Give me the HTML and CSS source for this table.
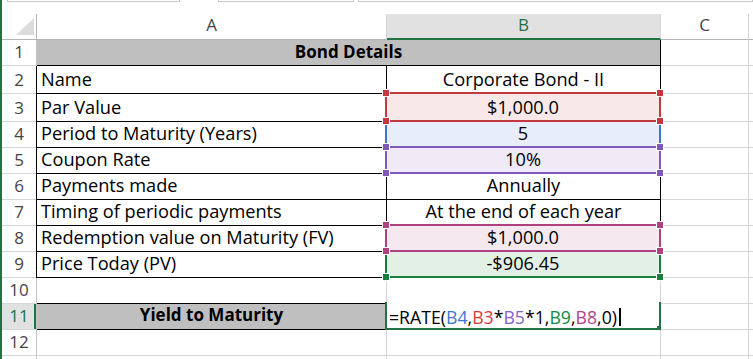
FILE: index.html
```html
<!DOCTYPE html>
<html>
<head>
<meta charset="utf-8">
<link rel="stylesheet" href="styles.css">
</head>
<body>
<div class="app">
  <div class="topbar">
    <span class="fb fb1"></span>
    <span class="fb fb2"></span>
    <span class="fb fb3"></span>
  </div>
  <div class="sheet">
    <div class="corner"><span class="tri"></span></div>
    <div class="ch">A</div>
    <div class="ch ch-active">B</div>
    <div class="ch">C</div>
    <div class="ch ch-last"></div>

    <div class="rh">1</div>
    <div class="c title">Bond Details</div>
    <div class="c"></div>
    <div class="c d"></div>

    <div class="rh">2</div>
    <div class="c a bx">Name</div>
    <div class="c b bx">Corporate Bond - II</div>
    <div class="c"></div>
    <div class="c d"></div>

    <div class="rh">3</div>
    <div class="c a bx">Par Value</div>
    <div class="c b bx">
      <div class="hl hl-red">$1,000.0<i class="h tl"></i><i class="h tr"></i><i class="h bl"></i><i class="h br"></i></div>
    </div>
    <div class="c"></div>
    <div class="c d"></div>

    <div class="rh">4</div>
    <div class="c a bx">Period to Maturity (Years)</div>
    <div class="c b bx">
      <div class="hl hl-blue">5<i class="h tl"></i><i class="h tr"></i><i class="h bl"></i><i class="h br"></i></div>
    </div>
    <div class="c"></div>
    <div class="c d"></div>

    <div class="rh">5</div>
    <div class="c a bx">Coupon Rate</div>
    <div class="c b bx">
      <div class="hl hl-purple">10%<i class="h tl"></i><i class="h tr"></i><i class="h bl"></i><i class="h br"></i></div>
    </div>
    <div class="c"></div>
    <div class="c d"></div>

    <div class="rh">6</div>
    <div class="c a bx">Payments made</div>
    <div class="c b bx">Annually</div>
    <div class="c"></div>
    <div class="c d"></div>

    <div class="rh">7</div>
    <div class="c a bx">Timing of periodic payments</div>
    <div class="c b bx">At the end of each year</div>
    <div class="c"></div>
    <div class="c d"></div>

    <div class="rh">8</div>
    <div class="c a bx">Redemption value on Maturity (FV)</div>
    <div class="c b bx">
      <div class="hl hl-magenta">$1,000.0<i class="h tl"></i><i class="h tr"></i><i class="h bl"></i><i class="h br"></i></div>
    </div>
    <div class="c"></div>
    <div class="c d"></div>

    <div class="rh">9</div>
    <div class="c a bx">Price Today (PV)</div>
    <div class="c b bx">
      <div class="hl hl-green">-$906.45<i class="h tl"></i><i class="h tr"></i><i class="h bl"></i><i class="h br"></i></div>
    </div>
    <div class="c"></div>
    <div class="c d"></div>

    <div class="rh">10</div>
    <div class="c a a10"></div>
    <div class="c b"></div>
    <div class="c"></div>
    <div class="c d"></div>

    <div class="rh rh-active">11</div>
    <div class="c a ytm">Yield to Maturity</div>
    <div class="c b">
      <div class="editor"><span class="formula">=RATE(<span class="f-blue">B4</span>,<span class="f-red">B3</span>*<span class="f-purple">B5</span>*1,<span class="f-green">B9</span>,<span class="f-magenta">B8</span>,0)</span><span class="caret"></span><i class="fill"></i></div>
    </div>
    <div class="c"></div>
    <div class="c d"></div>

    <div class="rh">12</div>
    <div class="c a"></div>
    <div class="c b"></div>
    <div class="c"></div>
    <div class="c d"></div>

    <div class="rh"></div>
    <div class="c a"></div>
    <div class="c b"></div>
    <div class="c"></div>
    <div class="c d"></div>
  </div>
</div>
</body>
</html>
```
FILE: styles.css
```css
:root {
  --grid: #d6d6d6;
  --hdr: #b4b4b4;
  --green: #217346;
  --red: #c3393f;
  --blue: #3a75cf;
  --purple: #7f5ab8;
  --magenta: #b0417f;
  --green2: #177f3c;
}

* { box-sizing: border-box; }

html, body {
  margin: 0;
  padding: 0;
  background: #fff;
}

body {
  font-family: "Open Sans", "Liberation Sans", sans-serif;
  font-size: 18.2px;
  color: #000;
}

.app {
  width: 753px;
  height: 359px;
  overflow: hidden;
  border-left: 2px solid var(--green);
}

/* formula-bar remnants at the very top */
.topbar {
  height: 14px;
  display: flex;
  align-items: flex-start;
  padding-left: 5px;
}

.fb {
  height: 2px;
  border: 1px solid #c8c8c8;
  border-top: 0;
}

.fb1 { width: 173px; margin-right: 38px; }
.fb2 { width: 136px; margin-right: 4px; }
.fb3 { flex: 1; }

/* sheet grid */
.sheet {
  display: grid;
  grid-template-columns: 35px 350px 274px 88px 1fr;
  grid-template-rows: 26px 26px 28px 28px repeat(9, 26px) 1fr;
  line-height: 20px;
}

.corner {
  position: relative;
  border-right: 1px solid var(--hdr);
  border-bottom: 1px solid var(--hdr);
}

.tri {
  position: absolute;
  right: 2px;
  bottom: 4px;
  width: 0;
  height: 0;
  border-left: 18px solid transparent;
  border-bottom: 17px solid #dcdcdc;
}

.ch {
  display: flex;
  align-items: flex-end;
  justify-content: center;
  padding-bottom: 4px;
  font-size: 17px;
  color: #444;
  border-right: 1px solid var(--grid);
  border-bottom: 1px solid var(--hdr);
}

.ch-active {
  background: #e1e1e1;
  color: var(--green);
  border-bottom: 2px solid var(--green);
  padding-bottom: 3px;
}

.ch-last { border-right: 0; }

.rh {
  display: flex;
  align-items: flex-end;
  justify-content: center;
  padding-bottom: 3.5px;
  font-size: 17px;
  color: #444;
  border-right: 1px solid #c4c4c4;
  border-bottom: 1px solid var(--grid);
}

.rh-active {
  background: #e1e1e1;
  color: var(--green);
  box-shadow: inset -2px 0 0 var(--green);
}

.c {
  position: relative;
  display: flex;
  align-items: flex-end;
  padding: 0 4px 4px;
  white-space: nowrap;
  border-right: 1px solid var(--grid);
  border-bottom: 1px solid var(--grid);
}

.c.d { border-right: 0; }

.title {
  grid-column: span 2;
  justify-content: center;
  background: #bfbfbf;
  font-size: 17px;
  font-weight: 700;
  border-right-color: #000;
  border-bottom-color: #000;
  padding-bottom: 3.5px;
}

.b { justify-content: center; }

.bx {
  border-right-color: #000;
  border-bottom-color: #000;
}

.a.bx { box-shadow: -1px 0 0 #000; }

.a10 { border-bottom-color: #000; }

.ytm {
  justify-content: center;
  background: #bfbfbf;
  font-size: 17px;
  font-weight: 700;
  border-right-color: #000;
  border-bottom-color: #000;
  padding-bottom: 4.5px;
}

/* formula reference highlight boxes (overlay the cell edges) */
.hl {
  position: absolute;
  top: -2px;
  left: -2px;
  right: -1px;
  bottom: -1px;
  display: flex;
  align-items: flex-end;
  justify-content: center;
  padding-bottom: 3px;
  border: 2px solid;
}

.hl-blue { border-color: var(--blue); background: #e7eef9; z-index: 1; }
.hl-red { border-color: var(--red); background: #f8e8e8; z-index: 2; }
.hl-purple { border-color: var(--purple); background: #f0eaf6; z-index: 3; }
.hl-green { border-color: var(--green2); background: #e3f0e5; z-index: 4; }
.hl-magenta { border-color: var(--magenta); background: #f6e8ef; z-index: 5; }

.h {
  position: absolute;
  width: 6px;
  height: 6px;
  box-shadow: 0 0 0 1px #fff;
}

.hl-blue .h { background: var(--blue); }
.hl-red .h { background: var(--red); }
.hl-purple .h { background: var(--purple); }
.hl-green .h { background: var(--green2); }
.hl-magenta .h { background: var(--magenta); }

.tl { left: -4px; top: -4px; }
.tr { right: -4px; top: -4px; }
.bl { left: -4px; bottom: -4px; }
.br { right: -4px; bottom: -4px; }

/* active cell in edit mode */
.editor {
  position: absolute;
  top: -2px;
  left: -2px;
  right: -1px;
  bottom: -1px;
  z-index: 6;
  display: flex;
  align-items: flex-end;
  padding: 0 0 1.5px 2px;
  background: #fff;
  border: 2px solid var(--green);
  border-top: 0;
  font-size: 17.7px;
}

.caret {
  width: 2px;
  height: 18px;
  margin-left: 2px;
  margin-bottom: 1px;
  background: #000;
}

.fill {
  position: absolute;
  right: -2px;
  bottom: -2px;
  width: 4px;
  height: 4px;
  background: var(--green);
}

.f-blue { color: #3b78d6; }
.f-red { color: #dc3a3f; }
.f-purple { color: #8661c4; }
.f-green { color: #0f8a3d; }
.f-magenta { color: #b4428a; }
```
